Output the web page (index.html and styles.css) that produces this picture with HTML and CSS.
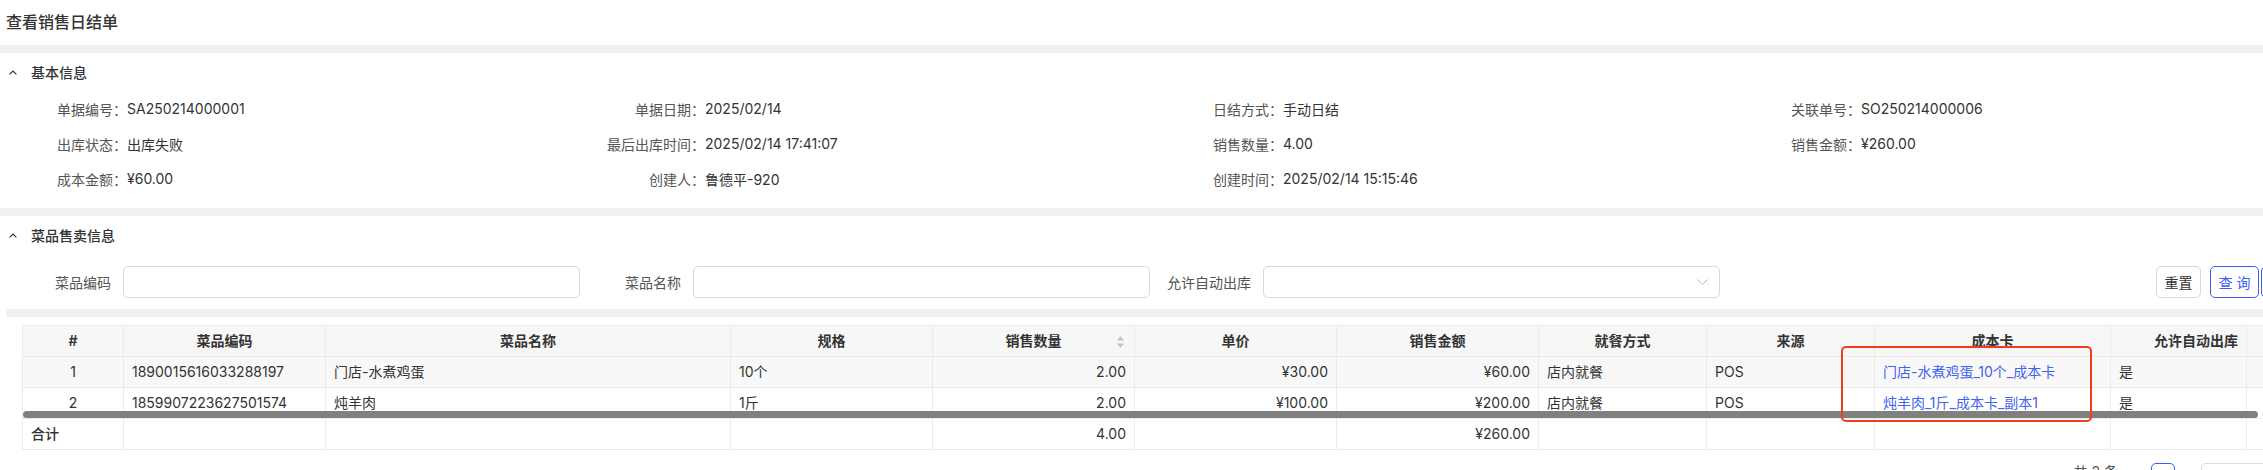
FILE: index.html
```html
<!DOCTYPE html>
<html lang="zh-CN">
<head>
    <meta charset="UTF-8">
    <title>查看销售日结单</title>
    <link rel="stylesheet" href="styles.css">
</head>
<body>
    <div class="page">
        <div class="page-title">查看销售日结单</div>
        <div class="band"></div>

        <section class="panel">
            <div class="panel-head">
                <svg class="caret" viewBox="0 0 8 5"><polyline points="0.6,4.4 4,1 7.4,4.4"/></svg>
                基本信息
            </div>
            <div class="info-grid">
                <div class="info-item"><span class="info-label">单据编号：</span><span>SA250214000001</span></div>
                <div class="info-item"><span class="info-label">单据日期：</span><span>2025/02/14</span></div>
                <div class="info-item"><span class="info-label">日结方式：</span><span>手动日结</span></div>
                <div class="info-item"><span class="info-label">关联单号：</span><span>SO250214000006</span></div>
                <div class="info-item"><span class="info-label">出库状态：</span><span>出库失败</span></div>
                <div class="info-item"><span class="info-label">最后出库时间：</span><span>2025/02/14 17:41:07</span></div>
                <div class="info-item"><span class="info-label">销售数量：</span><span>4.00</span></div>
                <div class="info-item"><span class="info-label">销售金额：</span><span>¥260.00</span></div>
                <div class="info-item"><span class="info-label">成本金额：</span><span>¥60.00</span></div>
                <div class="info-item"><span class="info-label">创建人：</span><span>鲁德平-920</span></div>
                <div class="info-item"><span class="info-label">创建时间：</span><span>2025/02/14 15:15:46</span></div>
            </div>
        </section>

        <div class="band"></div>

        <section class="panel">
            <div class="panel-head">
                <svg class="caret" viewBox="0 0 8 5"><polyline points="0.6,4.4 4,1 7.4,4.4"/></svg>
                菜品售卖信息
            </div>

            <div class="filter-row">
                <div class="filter-item">
                    <label for="dish-code">菜品编码</label>
                    <input type="text" id="dish-code" class="filter-input">
                </div>
                <div class="filter-item">
                    <label for="dish-name">菜品名称</label>
                    <input type="text" id="dish-name" class="filter-input">
                </div>
                <div class="filter-item">
                    <label>允许自动出库</label>
                    <div class="filter-input filter-select">
                        <svg class="select-arrow" viewBox="0 0 11 6"><polyline points="0.5,0.5 5.5,5.3 10.5,0.5"/></svg>
                    </div>
                </div>
                <div class="filter-actions">
                    <button class="btn btn-reset">重置</button>
                    <button class="btn btn-primary btn-query">查 询</button>
                    <button class="btn btn-primary btn-more"></button>
                </div>
            </div>

            <div class="band band-inset"></div>

            <div class="table-wrap">
                <table class="grid">
                    <colgroup>
                        <col style="width: 101px">
                        <col style="width: 202px">
                        <col style="width: 405px">
                        <col style="width: 202px">
                        <col style="width: 202px">
                        <col style="width: 202px">
                        <col style="width: 202px">
                        <col style="width: 168px">
                        <col style="width: 168px">
                        <col style="width: 236px">
                        <col style="width: 136px">
                        <col style="width: 200px">
                    </colgroup>
                    <thead>
                        <tr>
                            <th>#</th>
                            <th>菜品编码</th>
                            <th>菜品名称</th>
                            <th>规格</th>
                            <th class="sortable">销售数量
                                <svg class="sort-icon" viewBox="0 0 7 12"><polygon points="3.5,0 7,4.5 0,4.5"/><polygon points="0,7.5 7,7.5 3.5,12"/></svg>
                            </th>
                            <th>单价</th>
                            <th>销售金额</th>
                            <th>就餐方式</th>
                            <th>来源</th>
                            <th>成本卡</th>
                            <th class="th-right">允许自动出库</th>
                            <th class="th-left">错误信息</th>
                        </tr>
                    </thead>
                    <tbody>
                        <tr class="row-hover">
                            <td class="center">1</td>
                            <td>1890015616033288197</td>
                            <td>门店-水煮鸡蛋</td>
                            <td>10个</td>
                            <td class="num">2.00</td>
                            <td class="num">¥30.00</td>
                            <td class="num">¥60.00</td>
                            <td>店内就餐</td>
                            <td>POS</td>
                            <td class="link">门店-水煮鸡蛋_10个_成本卡</td>
                            <td>是</td>
                            <td></td>
                        </tr>
                        <tr>
                            <td class="center">2</td>
                            <td>1859907223627501574</td>
                            <td>炖羊肉</td>
                            <td>1斤</td>
                            <td class="num">2.00</td>
                            <td class="num">¥100.00</td>
                            <td class="num">¥200.00</td>
                            <td>店内就餐</td>
                            <td>POS</td>
                            <td class="link">炖羊肉_1斤_成本卡_副本1</td>
                            <td>是</td>
                            <td></td>
                        </tr>
                        <tr class="row-total">
                            <td class="total-label">合计</td>
                            <td></td>
                            <td></td>
                            <td></td>
                            <td class="num">4.00</td>
                            <td></td>
                            <td class="num">¥260.00</td>
                            <td></td>
                            <td></td>
                            <td></td>
                            <td></td>
                            <td></td>
                        </tr>
                    </tbody>
                </table>
                <div class="hscroll"></div>
                <div class="mark"></div>
            </div>

            <div class="pager">
                <span class="pager-total">共 2 条</span>
                <span class="pager-arrow">&lsaquo;</span>
                <span class="pager-page">1</span>
                <span class="pager-arrow">&rsaquo;</span>
                <span class="pager-size">20 条/页</span>
            </div>
        </section>
    </div>
</body>
</html>
```

FILE: styles.css
```css
body {
    margin: 0;
    font-family: Inter, "Noto Sans CJK SC", sans-serif;
    font-size: 14px;
    color: #333;
    background-color: #fff;
    overflow: hidden;
}
.page {
    width: 2300px;
}
.page-title {
    height: 45px;
    line-height: 44px;
    padding-left: 6px;
    font-size: 16px;
    font-weight: 500;
}
.band {
    height: 8px;
    background-color: #eff0f3;
}
.band-inset {
    margin: 11px 0 0 6px;
}
.panel-head {
    display: flex;
    align-items: center;
    height: 38px;
    padding-left: 9px;
    font-weight: 500;
}
.caret {
    width: 8px;
    height: 5px;
    margin-right: 14px;
    fill: none;
    stroke: #333;
    stroke-width: 1.2;
}
.info-grid {
    display: grid;
    grid-template-columns: repeat(4, 578px);
    grid-auto-rows: 35px;
    padding: 0 0 12px 15px;
}
.info-item {
    display: flex;
    align-items: center;
    white-space: nowrap;
}
.info-label {
    width: 112px;
    flex-shrink: 0;
    text-align: right;
    color: #555;
}
.filter-row {
    display: flex;
    align-items: center;
    height: 32px;
    margin-top: 12px;
    padding-left: 10px;
}
.filter-item {
    display: flex;
    align-items: center;
}
.filter-item label {
    width: 113px;
    padding-right: 12px;
    box-sizing: border-box;
    text-align: right;
    color: #555;
}
.filter-input {
    width: 457px;
    height: 32px;
    box-sizing: border-box;
    border: 1px solid #d9d9d9;
    border-radius: 5px;
    background-color: #fff;
    margin: 0;
}
.filter-select {
    display: flex;
    align-items: center;
    justify-content: flex-end;
    padding-right: 11px;
}
.select-arrow {
    width: 11px;
    height: 6px;
    fill: none;
    stroke: #b5b5b5;
    stroke-width: 1;
}
.filter-actions {
    display: flex;
    margin-left: auto;
}
.btn {
    height: 32px;
    box-sizing: border-box;
    border: 1px solid #d9d9d9;
    border-radius: 5px;
    background-color: #fff;
    font-family: inherit;
    font-size: 14px;
    color: #333;
    padding: 0;
    cursor: pointer;
}
.btn-reset {
    width: 45px;
    margin-right: 9px;
}
.btn-primary {
    border-color: #3b5cf0;
    color: #3b5cf0;
}
.btn-query {
    width: 49px;
    margin-right: 2px;
}
.btn-more {
    width: 39px;
}
.table-wrap {
    position: relative;
    margin: 8px 0 0 22px;
}
.grid {
    border-collapse: collapse;
    table-layout: fixed;
    width: 2424px;
}
.grid th, .grid td {
    border: 1px solid #ebebeb;
    height: 30px;
    padding: 0 8px;
    line-height: 20px;
    white-space: nowrap;
    overflow: hidden;
    text-align: left;
}
.grid th {
    background-color: #f7f7f7;
    font-weight: 600;
    text-align: center;
}
.grid th.th-right {
    text-align: right;
}
.grid th.th-left {
    text-align: left;
    padding-left: 16px;
}
.sortable {
    position: relative;
}
.sort-icon {
    position: absolute;
    right: 10px;
    top: 10px;
    width: 7px;
    height: 12px;
    fill: #c4c4c4;
}
.row-hover td {
    background-color: #f8f8f8;
}
.grid td.center {
    text-align: center;
}
.grid td.num {
    text-align: right;
}
.grid td.link {
    color: #4263eb;
}
.total-label {
    font-weight: 500;
}
.hscroll {
    position: absolute;
    left: 1px;
    top: 86px;
    width: 2235px;
    height: 7px;
    border-radius: 4px;
    background-color: #808080;
}
.mark {
    position: absolute;
    left: 1819px;
    top: 21px;
    width: 251px;
    height: 76px;
    box-sizing: border-box;
    border: 2px solid #f03d1e;
    border-radius: 5px;
}
.pager {
    display: flex;
    align-items: flex-start;
    justify-content: flex-end;
    height: 28px;
    margin-top: 13px;
    color: #555;
}
.pager-total {
    margin-right: 8px;
    line-height: 18px;
}
.pager-arrow {
    width: 20px;
    line-height: 22px;
    text-align: center;
    color: #999;
}
.pager-page {
    width: 24px;
    height: 28px;
    margin: 0 3px 0 5px;
    box-sizing: border-box;
    border: 1px solid #3b5cf0;
    border-radius: 5px;
    color: #3b5cf0;
    text-align: center;
    line-height: 26px;
}
.pager-size {
    width: 99px;
    height: 28px;
    margin-left: 3px;
    box-sizing: border-box;
    border: 1px solid #d9d9d9;
    border-radius: 5px;
    padding-left: 10px;
    line-height: 26px;
}
```
